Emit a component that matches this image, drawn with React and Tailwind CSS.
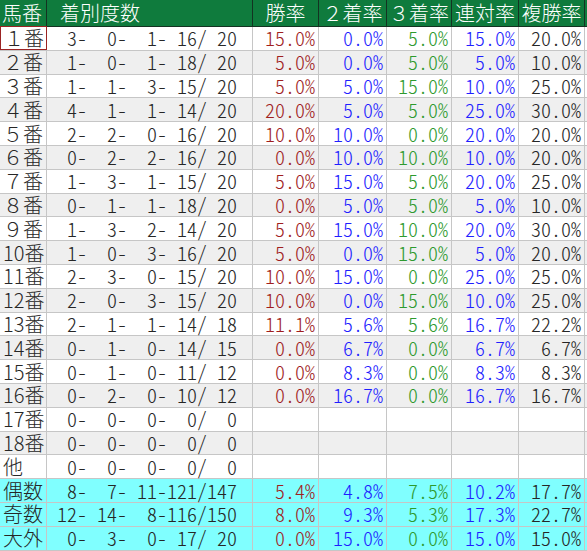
import React from "react";

const rows = [
  ["１番", [3, 0, 1, 16, 20], ["15.0", "0.0", "5.0", "15.0", "20.0"]],
  ["２番", [1, 0, 1, 18, 20], ["5.0", "0.0", "5.0", "5.0", "10.0"]],
  ["３番", [1, 1, 3, 15, 20], ["5.0", "5.0", "15.0", "10.0", "25.0"]],
  ["４番", [4, 1, 1, 14, 20], ["20.0", "5.0", "5.0", "25.0", "30.0"]],
  ["５番", [2, 2, 0, 16, 20], ["10.0", "10.0", "0.0", "20.0", "20.0"]],
  ["６番", [0, 2, 2, 16, 20], ["0.0", "10.0", "10.0", "10.0", "20.0"]],
  ["７番", [1, 3, 1, 15, 20], ["5.0", "15.0", "5.0", "20.0", "25.0"]],
  ["８番", [0, 1, 1, 18, 20], ["0.0", "5.0", "5.0", "5.0", "10.0"]],
  ["９番", [1, 3, 2, 14, 20], ["5.0", "15.0", "10.0", "20.0", "30.0"]],
  ["10番", [1, 0, 3, 16, 20], ["5.0", "0.0", "15.0", "5.0", "20.0"]],
  ["11番", [2, 3, 0, 15, 20], ["10.0", "15.0", "0.0", "25.0", "25.0"]],
  ["12番", [2, 0, 3, 15, 20], ["10.0", "0.0", "15.0", "10.0", "25.0"]],
  ["13番", [2, 1, 1, 14, 18], ["11.1", "5.6", "5.6", "16.7", "22.2"]],
  ["14番", [0, 1, 0, 14, 15], ["0.0", "6.7", "0.0", "6.7", "6.7"]],
  ["15番", [0, 1, 0, 11, 12], ["0.0", "8.3", "0.0", "8.3", "8.3"]],
  ["16番", [0, 2, 0, 10, 12], ["0.0", "16.7", "0.0", "16.7", "16.7"]],
  ["17番", [0, 0, 0, 0, 0], null],
  ["18番", [0, 0, 0, 0, 0], null],
  ["他", [0, 0, 0, 0, 0], null],
  ["偶数", [8, 7, 11, 121, 147], ["5.4", "4.8", "7.5", "10.2", "17.7"], true],
  ["奇数", [12, 14, 8, 116, 150], ["8.0", "9.3", "5.3", "17.3", "22.7"], true],
  ["大外", [0, 3, 0, 17, 20], ["0.0", "15.0", "0.0", "15.0", "15.0"], true],
];

const widths = ["w-[47px]", "w-[206px]", "w-[66px]", "w-[68px]", "w-[65px]", "w-[67px]", "w-[66px]"];
const colors = ["text-[#a01e1e]", "text-[#1f1fff]", "text-[#2e9a2e]", "text-[#1f1fff]", "text-[#262626]"];
const heads = ["勝率", "２着率", "３着率", "連対率", "複勝率"];

const pad = (n) => String(n).padStart(3, " ");
const record = (r) => `${pad(r[0])}-${pad(r[1])}-${pad(r[2])}-${pad(r[3])}/${pad(r[4])}`;

export default function App() {
  return (
    <div
      className="w-[587px] h-[551px] bg-white overflow-hidden text-[20px] leading-none font-light text-[#262626]"
      style={{ fontFamily: '"Noto Sans CJK JP", monospace' }}
    >
      <div className="flex h-[27px] bg-[#0f7b3d] text-white border-b border-[#143322]">
        <div className={`${widths[0]} flex items-center pl-[2px] border-r border-[#143322]`}>馬番</div>
        <div className={`${widths[1]} flex items-center pl-[13px] border-r border-[#143322]`}>着別度数</div>
        {heads.map((h, i) => (
          <div key={h} className={`${widths[i + 2]} flex items-center justify-center border-r border-[#143322]`}>
            {h}
          </div>
        ))}
      </div>
      {rows.map(([name, rec, pct, cyan], i) => (
        <div
          key={name}
          className={`flex h-[23.8px] border-b border-[#c6c6c6] ${cyan ? "bg-[#80ffff]" : i % 2 ? "bg-[#efefef]" : "bg-white"}`}
        >
          <div
            className={`${widths[0]} flex items-center pl-[3px] border-r ${i === 0 ? "border border-[#9b2323] -mt-px" : "border-[#c6c6c6]"}`}
          >
            {name}
          </div>
          <div className={`${widths[1]} flex items-center justify-end pr-[15px] whitespace-pre [font-feature-settings:'hwid'] border-r border-[#c6c6c6]`}>
            {record(rec)}
          </div>
          {[0, 1, 2, 3, 4].map((k) => (
            <div
              key={k}
              className={`${widths[k + 2]} flex items-center justify-end pr-[3px] [font-feature-settings:'hwid'] border-r border-[#c6c6c6] ${colors[k]}`}
            >
              {pct ? pct[k] + "%" : ""}
            </div>
          ))}
        </div>
      ))}
    </div>
  );
}
